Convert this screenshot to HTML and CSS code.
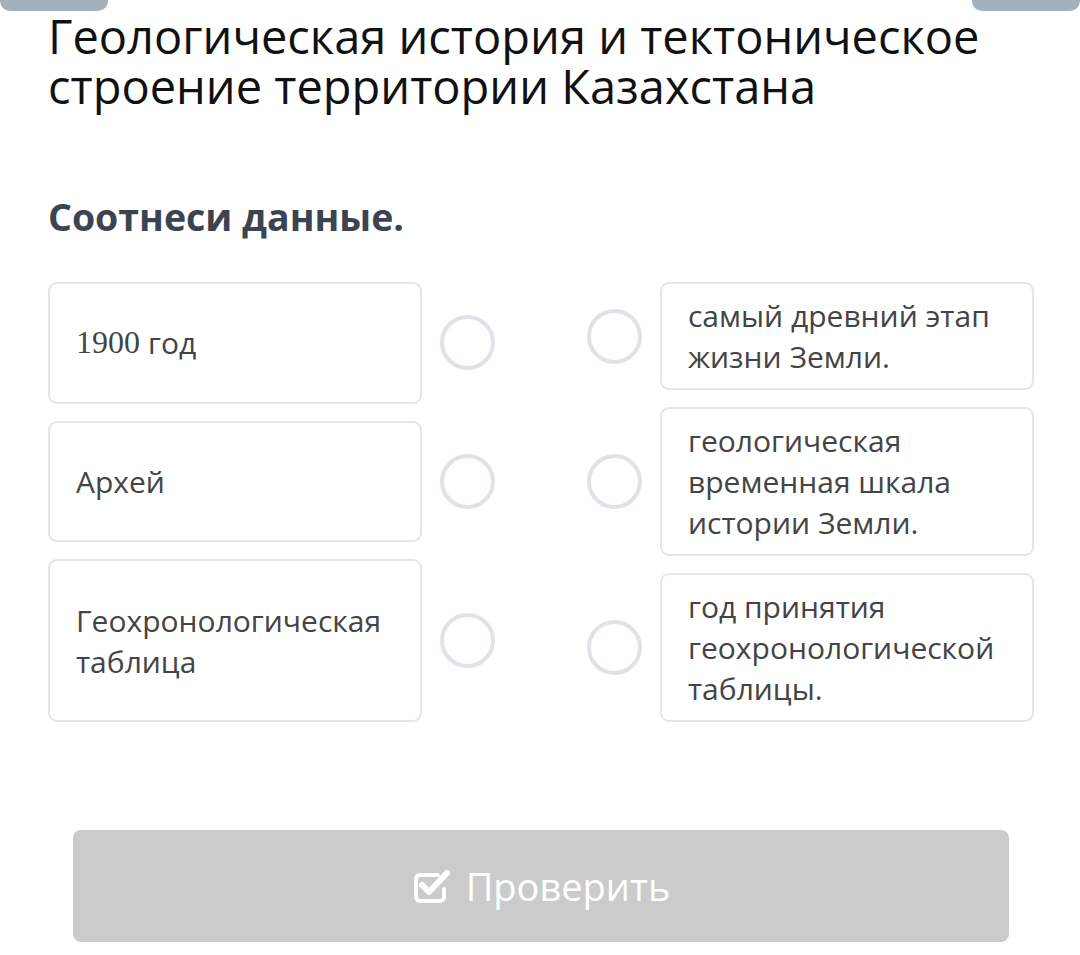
FILE: index.html
```html
<!DOCTYPE html>
<html>
<head>
    <title>Соотнеси данные</title>
    <link rel="stylesheet" href="styles.css">
</head>
<body>
    <div class="top-tabs">
        <div class="tab"></div>
        <div class="tab"></div>
    </div>
    <div class="page">
        <h1 class="title">Геологическая история и тектоническое строение территории Казахстана</h1>
        <h2 class="task">Соотнеси данные.</h2>

        <div class="match">
            <div class="side side-left">
                <div class="item">
                    <div class="card"><span class="num">1900</span> год</div>
                    <div class="dot"></div>
                </div>
                <div class="item">
                    <div class="card">Архей</div>
                    <div class="dot"></div>
                </div>
                <div class="item">
                    <div class="card">Геохронологическая таблица</div>
                    <div class="dot"></div>
                </div>
            </div>
            <div class="side side-right">
                <div class="item">
                    <div class="dot"></div>
                    <div class="card">самый древний этап жизни Земли.</div>
                </div>
                <div class="item">
                    <div class="dot"></div>
                    <div class="card">геологическая временная шкала истории Земли.</div>
                </div>
                <div class="item">
                    <div class="dot"></div>
                    <div class="card">год принятия геохронологической таблицы.</div>
                </div>
            </div>
        </div>

        <button class="check-btn" type="button">
            <svg class="check-icon" width="40" height="36" viewBox="0 0 40 36">
                <path d="M26 7 H8 a4 4 0 0 0 -4 4 v18 a4 4 0 0 0 4 4 h20 a4 4 0 0 0 4 -4 v-8" fill="none" stroke="#fff" stroke-width="4" stroke-linecap="round"/>
                <path d="M10 17 l7 7 L35 5" fill="none" stroke="#fff" stroke-width="6" stroke-linecap="round" stroke-linejoin="round"/>
            </svg>
            <span>Проверить</span>
        </button>
    </div>
</body>
</html>
```

FILE: styles.css
```css
body {
    margin: 0;
    padding: 0;
    background-color: #fff;
    font-family: "Open Sans", "Noto Sans", sans-serif;
    color: #444;
}
.top-tabs {
    display: flex;
    justify-content: space-between;
    height: 11px;
}
.tab {
    width: 108px;
    background-color: #a3b1bc;
    border-radius: 0 0 10px 10px;
}
.page {
    padding: 0 46px 0 48px;
}
.title {
    margin: 0;
    font-size: 47px;
    font-weight: 400;
    line-height: 50px;
    color: #111;
}
.task {
    margin: 80px 0 40px;
    font-size: 37.5px;
    font-weight: 700;
    color: #3b4450;
}
.match {
    display: flex;
    justify-content: space-between;
}
.side {
    display: flex;
    flex-direction: column;
    gap: 17px;
    width: 447px;
}
.side-left .item {
    flex-grow: 1;
}
.item {
    display: flex;
    align-items: stretch;
    gap: 18px;
}
.card {
    flex: 1;
    display: flex;
    align-items: center;
    border: 2px solid #e3e5e8;
    border-radius: 9px;
    padding: 11px 20px 11px 26px;
    font-size: 30px;
    line-height: 41px;
    color: #444;
}
.num {
    font-family: "Liberation Serif", serif;
    font-size: 32px;
    margin-right: 8px;
}
.dot {
    align-self: center;
    width: 47px;
    height: 47px;
    border: 4px solid #dfe3e7;
    border-radius: 50%;
    flex-shrink: 0;
}
.check-btn {
    display: flex;
    align-items: center;
    justify-content: center;
    gap: 14px;
    width: 936px;
    height: 112px;
    margin: 108px 0 0 25px;
    background-color: #cbcbcb;
    border: none;
    border-radius: 8px;
    color: #fff;
    font-family: "Open Sans", sans-serif;
    font-size: 38px;
}
```
